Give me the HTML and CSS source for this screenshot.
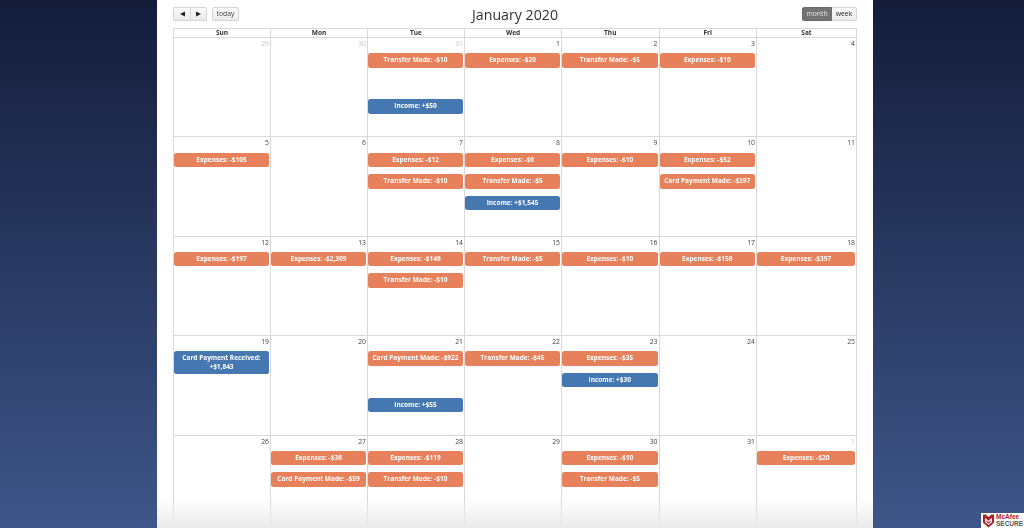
FILE: index.html
```html
<!DOCTYPE html>
<html lang="en">
<head>
<meta charset="utf-8">
<title>January 2020</title>
<link rel="stylesheet" href="styles.css">
</head>
<body>
<main class="panel">
  <div class="toolbar">
    <div class="left">
      <div class="btn-group">
        <button class="btn arrow"><svg width="7" height="6" viewBox="0 0 7 6"><path d="M1 3 6 .5v5z"/></svg></button>
        <button class="btn arrow"><svg width="7" height="6" viewBox="0 0 7 6"><path d="M6 3 1 .5v5z"/></svg></button>
      </div>
      <button class="btn today">today</button>
    </div>
    <h1 class="title">January 2020</h1>
    <div class="btn-group right">
      <button class="btn view active">month</button>
      <button class="btn view">week</button>
    </div>
  </div>
  <div class="calendar">
    <div class="head"><div>Sun</div><div>Mon</div><div>Tue</div><div>Wed</div><div>Thu</div><div>Fri</div><div>Sat</div></div>

    <div class="week">
      <div class="day other"><span class="num">29</span></div>
      <div class="day other"><span class="num">30</span></div>
      <div class="day other"><span class="num">31</span><div class="ev out">Transfer Made: -$10</div><div class="ev in skip">Income: +$50</div></div>
      <div class="day"><span class="num">1</span><div class="ev out">Expenses: -$20</div></div>
      <div class="day"><span class="num">2</span><div class="ev out">Transfer Made: -$5</div></div>
      <div class="day"><span class="num">3</span><div class="ev out">Expenses: -$10</div></div>
      <div class="day"><span class="num">4</span></div>
    </div>

    <div class="week">
      <div class="day"><span class="num">5</span><div class="ev out">Expenses: -$105</div></div>
      <div class="day"><span class="num">6</span></div>
      <div class="day"><span class="num">7</span><div class="ev out">Expenses: -$12</div><div class="ev out">Transfer Made: -$10</div></div>
      <div class="day"><span class="num">8</span><div class="ev out">Expenses: -$6</div><div class="ev out">Transfer Made: -$5</div><div class="ev in">Income: +$1,545</div></div>
      <div class="day"><span class="num">9</span><div class="ev out">Expenses: -$10</div></div>
      <div class="day"><span class="num">10</span><div class="ev out">Expenses: -$52</div><div class="ev out">Card Payment Made: -$397</div></div>
      <div class="day"><span class="num">11</span></div>
    </div>

    <div class="week">
      <div class="day"><span class="num">12</span><div class="ev out">Expenses: -$197</div></div>
      <div class="day"><span class="num">13</span><div class="ev out">Expenses: -$2,309</div></div>
      <div class="day"><span class="num">14</span><div class="ev out">Expenses: -$146</div><div class="ev out">Transfer Made: -$10</div></div>
      <div class="day"><span class="num">15</span><div class="ev out">Transfer Made: -$5</div></div>
      <div class="day"><span class="num">16</span><div class="ev out">Expenses: -$10</div></div>
      <div class="day"><span class="num">17</span><div class="ev out">Expenses: -$156</div></div>
      <div class="day"><span class="num">18</span><div class="ev out">Expenses: -$397</div></div>
    </div>

    <div class="week">
      <div class="day"><span class="num">19</span><div class="ev in">Card Payment Received: +$1,843</div></div>
      <div class="day"><span class="num">20</span></div>
      <div class="day"><span class="num">21</span><div class="ev out">Card Payment Made: -$922</div><div class="ev in skip">Income: +$55</div></div>
      <div class="day"><span class="num">22</span><div class="ev out">Transfer Made: -$45</div></div>
      <div class="day"><span class="num">23</span><div class="ev out">Expenses: -$35</div><div class="ev in">Income: +$30</div></div>
      <div class="day"><span class="num">24</span></div>
      <div class="day"><span class="num">25</span></div>
    </div>

    <div class="week">
      <div class="day"><span class="num">26</span></div>
      <div class="day"><span class="num">27</span><div class="ev out">Expenses: -$36</div><div class="ev out">Card Payment Made: -$59</div></div>
      <div class="day"><span class="num">28</span><div class="ev out">Expenses: -$119</div><div class="ev out">Transfer Made: -$10</div></div>
      <div class="day"><span class="num">29</span></div>
      <div class="day"><span class="num">30</span><div class="ev out">Expenses: -$10</div><div class="ev out">Transfer Made: -$5</div></div>
      <div class="day"><span class="num">31</span></div>
      <div class="day other"><span class="num">1</span><div class="ev out">Expenses: -$20</div></div>
    </div>
  </div>
  <div class="fade"></div>
</main>
<aside class="badge">
  <svg width="11" height="14" viewBox="0 0 12 14"><path fill="#a9252b" d="M0 0h3l3 2.5L9 0h3v9l-6 5-6-5z"/><path fill="#fff" d="M2.2 3.8 6 6.6l3.8-2.8v4.4L6 11.4 2.2 8.2z"/><path fill="#a9252b" d="M3.5 6.5 6 8.2l2.500-1.700v1.100L6 10 3.500 7.600z"/></svg>
  <div class="badge-text"><span class="mc">McAfee</span><span class="sec">SECURE</span></div>
</aside>
</body>
</html>
```
FILE: styles.css
```css
* { box-sizing: border-box; }
html, body { height: 100%; }
body {
  margin: 0;
  height: 528px;
  overflow: hidden;
  display: flex;
  justify-content: center;
  background: linear-gradient(#141c3a, #3e5689);
  font-family: "Open Sans", sans-serif;
}
.panel {
  position: relative;
  width: 716px;
  margin-left: 6px;
  height: 528px;
  padding: 0 16px;
  background: #fff;
  overflow: hidden;
}
.toolbar {
  height: 28px;
  display: flex;
  align-items: flex-start;
  justify-content: space-between;
  padding-top: 7px;
  position: relative;
  will-change: transform;
}
.left { display: flex; gap: 5px; }
.btn-group { display: flex; }
.btn {
  height: 14px;
  padding: 0;
  border: 1px solid #d4d4d4;
  background: linear-gradient(#fafafa, #ececec);
  color: #444;
  font: 6.8px/12px "Open Sans", sans-serif;
  display: flex;
  align-items: center;
  justify-content: center;
}
.arrow { width: 17px; }
.arrow:first-child { border-radius: 2px 0 0 2px; border-right: 0; }
.arrow:last-child { border-radius: 0 2px 2px 0; }
.arrow svg { fill: #222; }
.today { width: 27px; border-radius: 2px; }
.view { width: 30px; color: #222; }
.view.active { background: #737373; color: #e6e6e6; border-color: #6a6a6a; border-radius: 2px 0 0 2px; }
.view:last-child { width: 25px; border-left: 0; border-radius: 0 2px 2px 0; }
.title {
  position: absolute;
  top: 4px;
  left: 0;
  right: 0;
  margin: 0;
  text-align: center;
  font-size: 14.2px;
  line-height: 22px;
  font-weight: 400;
  color: #333;
  pointer-events: none;
}
.calendar { width: 684px; border-left: 1px solid #d9d9d9; border-top: 1px solid #d9d9d9; will-change: transform; }
.head, .week { display: grid; grid-template-columns: 97px 97px 97px 97px 97.5px 97.5px 100px; }
.head div {
  height: 9px;
  border-right: 1px solid #d9d9d9;
  border-bottom: 1px solid #d9d9d9;
  text-align: center;
  font-size: 6.5px;
  line-height: 8px;
  font-weight: 700;
  color: #333;
}
.week { height: 99.4px; }
.day {
  border-right: 1px solid #d9d9d9;
  border-bottom: 1px solid #d9d9d9;
  padding: 1px 0 0;
  min-width: 0;
}
.num {
  display: block;
  height: 14.2px;
  padding-right: 1px;
  text-align: right;
  font-size: 6.8px;
  line-height: 9px;
  color: #444;
}
.other .num { color: #c4c4c4; }
.ev {
  margin: 0 1px 7px 0;
  padding: 3px 2px;
  border-radius: 2.5px;
  color: #fff;
  text-align: center;
  font-size: 6.5px;
  line-height: 8.5px;
  font-weight: 700;
}
.out { background: #e6815c; }
.in { background: #4577b1; }
.skip { margin-top: 31.7px; }
.fade {
  position: absolute;
  left: 0; right: 0; bottom: 0;
  height: 30px;
  background: linear-gradient(rgba(238,238,238,0), #ebebeb);
}
.badge {
  position: fixed;
  right: 0;
  bottom: 0;
  width: 43px;
  height: 15px;
  background: #fff;
  display: flex;
  align-items: center;
  gap: 2px;
  padding-left: 2px;
}
.badge-text { display: flex; flex-direction: column; font: 700 6.5px/6.5px "Liberation Sans", sans-serif; }
.mc { color: #a9252b; }
.sec { color: #555; }
```
